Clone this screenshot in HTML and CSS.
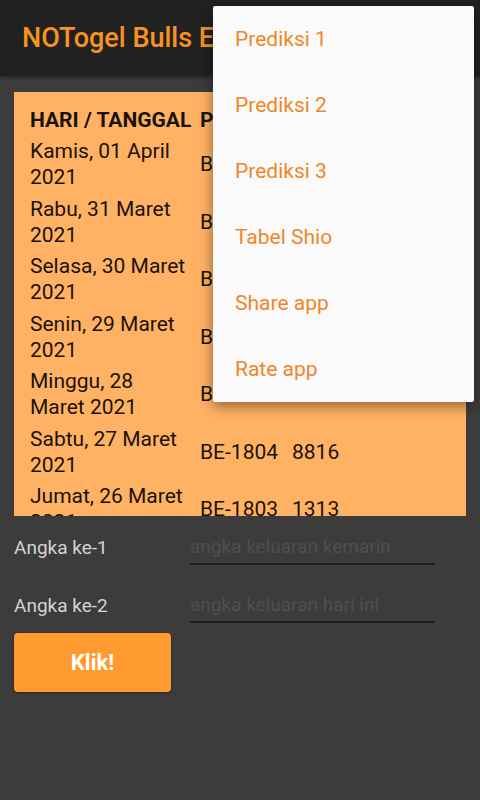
FILE: index.html
```html
<!DOCTYPE html>
<html lang="id">
<head>
    <meta charset="UTF-8">
    <title>NOTogel Bulls Eye</title>
    <link rel="stylesheet" href="styles.css">
</head>
<body>
    <div class="app">
        <div class="toolbar">
            <h1 class="title">NOTogel Bulls Eye</h1>
        </div>
        <div class="content">
            <div class="card">
                <div class="table">
                    <div class="row head">
                        <span class="day">HARI / TANGGAL</span><span class="period">PERIODE</span><span class="num">RESULT</span>
                    </div>
                    <div class="row">
                        <span class="day">Kamis, 01 April 2021</span><span class="period">BE-1808</span><span class="num">4721</span>
                    </div>
                    <div class="row">
                        <span class="day">Rabu, 31 Maret 2021</span><span class="period">BE-1807</span><span class="num">0593</span>
                    </div>
                    <div class="row">
                        <span class="day">Selasa, 30 Maret 2021</span><span class="period">BE-1806</span><span class="num">6148</span>
                    </div>
                    <div class="row">
                        <span class="day">Senin, 29 Maret 2021</span><span class="period">BE-1805</span><span class="num">3370</span>
                    </div>
                    <div class="row">
                        <span class="day">Minggu, 28 Maret 2021</span><span class="period">BE-1805</span><span class="num">7280</span>
                    </div>
                    <div class="row">
                        <span class="day">Sabtu, 27 Maret 2021</span><span class="period">BE-1804</span><span class="num">8816</span>
                    </div>
                    <div class="row">
                        <span class="day">Jumat, 26 Maret 2021</span><span class="period">BE-1803</span><span class="num">1313</span>
                    </div>
                    <div class="row">
                        <span class="day">Kamis, 25 Maret 2021</span><span class="period">BE-1802</span><span class="num">5962</span>
                    </div>
                </div>
            </div>
            <div class="form">
                <div class="field">
                    <label class="label">Angka ke-1</label>
                    <input class="input" type="text" placeholder="angka keluaran kemarin">
                </div>
                <div class="field">
                    <label class="label">Angka ke-2</label>
                    <input class="input" type="text" placeholder="angka keluaran hari ini">
                </div>
                <button class="btn">Klik!</button>
            </div>
        </div>
        <ul class="menu">
            <li>Prediksi 1</li>
            <li>Prediksi 2</li>
            <li>Prediksi 3</li>
            <li>Tabel Shio</li>
            <li>Share app</li>
            <li>Rate app</li>
        </ul>
    </div>
</body>
</html>
```

FILE: styles.css
```css
*{
    margin: 0;
    padding: 0;
    box-sizing: border-box;
}
body{
    width: 480px;
    height: 800px;
    overflow: hidden;
    background: #3c3c3c;
    font-family: Roboto, "Liberation Sans", sans-serif;
}
.app{
    position: relative;
    height: 800px;
}
.toolbar{
    height: 76px;
    background: #212121;
    padding: 0 22px;
    display: flex;
    align-items: center;
    box-shadow: 0 2px 4px rgba(0,0,0,0.35);
}
.title{
    font-size: 27px;
    font-weight: 500;
    color: #f7931e;
    white-space: nowrap;
}
.content{
    padding: 16px 14px 0;
}
.card{
    height: 424px;
    overflow: hidden;
    background: #ffb263;
    padding: 15px 16px 0;
}
.row{
    display: flex;
    align-items: center;
    padding: 3px 0 2.5px;
    font-size: 21px;
    line-height: 26px;
    color: #1a1208;
}
.row.head{
    font-weight: bold;
    padding: 0 0 2px;
    white-space: nowrap;
}
.day{
    width: 170px;
    flex: none;
    padding-right: 10px;
}
.period{
    width: 92px;
    flex: none;
}
.form{
    padding-top: 13px;
}
.field{
    display: flex;
    align-items: center;
    margin-bottom: 22px;
}
.label{
    width: 176px;
    font-size: 19px;
    color: #d4d4d4;
}
.input{
    width: 245px;
    height: 36px;
    border: none;
    border-bottom: 2px solid #1f1f1f;
    background: transparent;
    font-family: Roboto, "Liberation Sans", sans-serif;
    font-size: 19px;
    color: #eeeeee;
    outline: none;
}
.input::placeholder{
    color: #4f4f4f;
}
.btn{
    display: block;
    width: 157px;
    height: 59px;
    margin-top: -12px;
    border: none;
    border-radius: 4px;
    background: #ff9a30;
    color: #ffffff;
    font-family: Roboto, "Liberation Sans", sans-serif;
    font-size: 22px;
    font-weight: bold;
    box-shadow: 0 1px 3px rgba(0,0,0,0.4);
}
.menu{
    position: absolute;
    top: 6px;
    left: 213px;
    width: 261px;
    list-style: none;
    background: #fafafa;
    border-radius: 2px;
    padding: 0;
    box-shadow: 0 4px 14px rgba(0,0,0,0.45);
}
.menu li{
    height: 66px;
    line-height: 66px;
    padding-left: 22px;
    font-size: 21px;
    color: #f0862a;
}
```
